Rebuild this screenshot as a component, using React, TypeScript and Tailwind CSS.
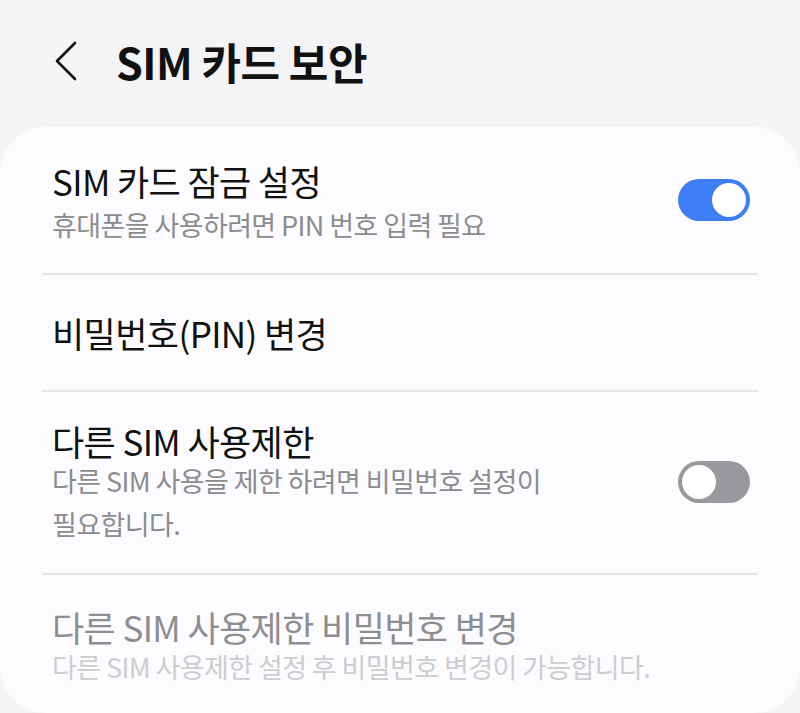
import React from "react";

const font = { fontFamily: '"Noto Sans CJK KR", "Noto Sans", sans-serif' };

function Toggle({ on }: { on: boolean }) {
  return on ? (
    <div className="mb-[6px] flex h-[42px] w-[72px] shrink-0 items-center justify-end rounded-full bg-[#3d7ef6] pr-[4px]">
      <div className="h-[34px] w-[34px] rounded-full bg-white" />
    </div>
  ) : (
    <div className="mb-[4px] flex h-[42px] w-[72px] shrink-0 items-center justify-start rounded-full bg-[#98989d] pl-[4px]">
      <div className="h-[34px] w-[34px] rounded-full bg-white" />
    </div>
  );
}

function Divider() {
  return <div className="h-[2px] w-full bg-[#e6e6ea]" />;
}

export default function App() {
  return (
    <div className="flex h-[713px] w-[800px] flex-col overflow-hidden bg-[#f4f4f6]" style={font}>
      <div className="flex h-[127px] shrink-0 items-center pb-[6px]">
        <div className="ml-[52px] flex h-[40px] w-[28px] items-center justify-center">
          <svg width="26" height="40" viewBox="0 0 26 40" fill="none">
            <path d="M22 2 L4 20 L22 38" stroke="#111" strokeWidth="2.6" strokeLinecap="round" strokeLinejoin="round" />
          </svg>
        </div>
        <div className="ml-[36px] text-[43px] font-bold leading-[50px] tracking-[-0.5px] text-[#111]">SIM 카드 보안</div>
      </div>
      <div className="flex flex-1 flex-col rounded-[46px] bg-[#fcfcfe] px-[42px]">
        <div className="flex items-center justify-between pb-[26px] pl-[10px] pr-[8px] pt-[32px]">
          <div className="flex flex-col">
            <div className="text-[35px] leading-[44px] tracking-[-0.6px] text-[#111]">SIM 카드 잠금 설정</div>
            <div className="text-[27px] leading-[44px] tracking-[-0.6px] text-[#8c8c90]">휴대폰을 사용하려면 PIN 번호 입력 필요</div>
          </div>
          <Toggle on />
        </div>
        <Divider />
        <div className="flex h-[115px] items-center pl-[10px]">
          <div className="text-[35px] leading-[44px] tracking-[-0.6px] text-[#111]">비밀번호(PIN) 변경</div>
        </div>
        <Divider />
        <div className="flex items-center justify-between pb-[28px] pl-[10px] pr-[8px] pt-[31px]">
          <div className="flex flex-col">
            <div className="text-[35px] leading-[36px] tracking-[-0.6px] text-[#111]">다른 SIM 사용제한</div>
            <div className="w-[520px] break-keep text-[27px] leading-[43px] tracking-[-0.6px] text-[#8c8c90]">
              다른 SIM 사용을 제한 하려면 비밀번호 설정이 필요합니다.
            </div>
          </div>
          <Toggle on={false} />
        </div>
        <Divider />
        <div className="flex flex-col pl-[10px] pt-[30px]">
          <div className="text-[35px] leading-[44px] tracking-[-0.6px] text-[#8e8e92]">다른 SIM 사용제한 비밀번호 변경</div>
          <div className="text-[27px] leading-[36px] tracking-[-0.6px] text-[#cdcdd1]">다른 SIM 사용제한 설정 후 비밀번호 변경이 가능합니다.</div>
        </div>
      </div>
    </div>
  );
}
